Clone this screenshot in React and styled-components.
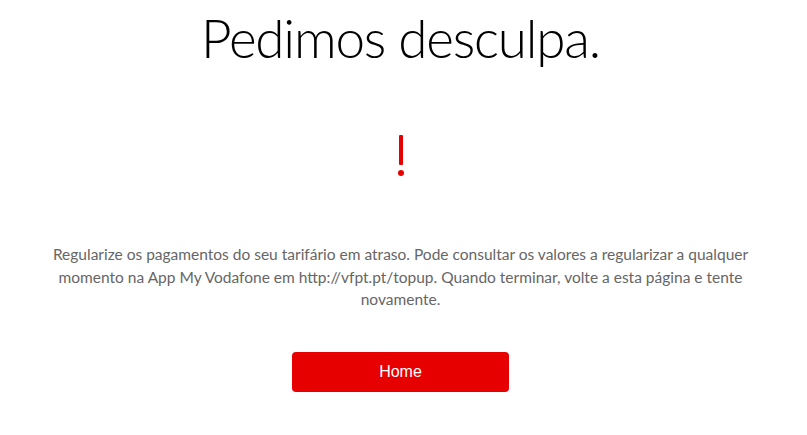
import React from "react";
import styled, { createGlobalStyle } from "styled-components";

const Global = createGlobalStyle`
  html, body { margin: 0; padding: 0; background: #fff; }
  body { font-family: "Lato", "Liberation Sans", sans-serif; }
`;

const Page = styled.main`
  display: flex;
  flex-direction: column;
  align-items: center;
  padding: 6px 46px 0 40px;
`;

const Title = styled.h1`
  margin: 0;
  font-family: "Lato", sans-serif;
  font-weight: 300;
  font-size: 53px;
  line-height: 64px;
  letter-spacing: -1.2px;
  color: #000;
`;

const Alert = styled.div`
  margin-top: 65px;
  display: flex;
  flex-direction: column;
  align-items: center;
  gap: 5px;
`;

const Bar = styled.span`
  width: 4px;
  height: 30px;
  background: #e60000;
  border-radius: 1px;
`;

const Dot = styled.span`
  width: 6px;
  height: 6px;
  border-radius: 50%;
  background: #e60000;
`;

const Message = styled.p`
  margin: 67px 0 0;
  max-width: 720px;
  text-align: center;
  font-family: "Lato", sans-serif;
  font-weight: 400;
  font-size: 15.5px;
  line-height: 22.5px;
  color: #666;
`;

const Button = styled.button`
  margin-top: 41px;
  width: 217px;
  height: 40px;
  border: none;
  border-radius: 4px;
  background: #e60000;
  color: #fff;
  font-family: "Liberation Sans", sans-serif;
  font-size: 16px;
  cursor: pointer;
`;

export default function App() {
  return (
    <>
      <Global />
      <Page>
        <Title>Pedimos desculpa.</Title>
        <Alert>
          <Bar />
          <Dot />
        </Alert>
        <Message>
          Regularize os pagamentos do seu tarifário em atraso. Pode consultar os valores a regularizar a qualquer momento na App My Vodafone em http://vfpt.pt/topup. Quando terminar, volte a esta página e tente novamente.
        </Message>
        <Button>Home</Button>
      </Page>
    </>
  );
}
